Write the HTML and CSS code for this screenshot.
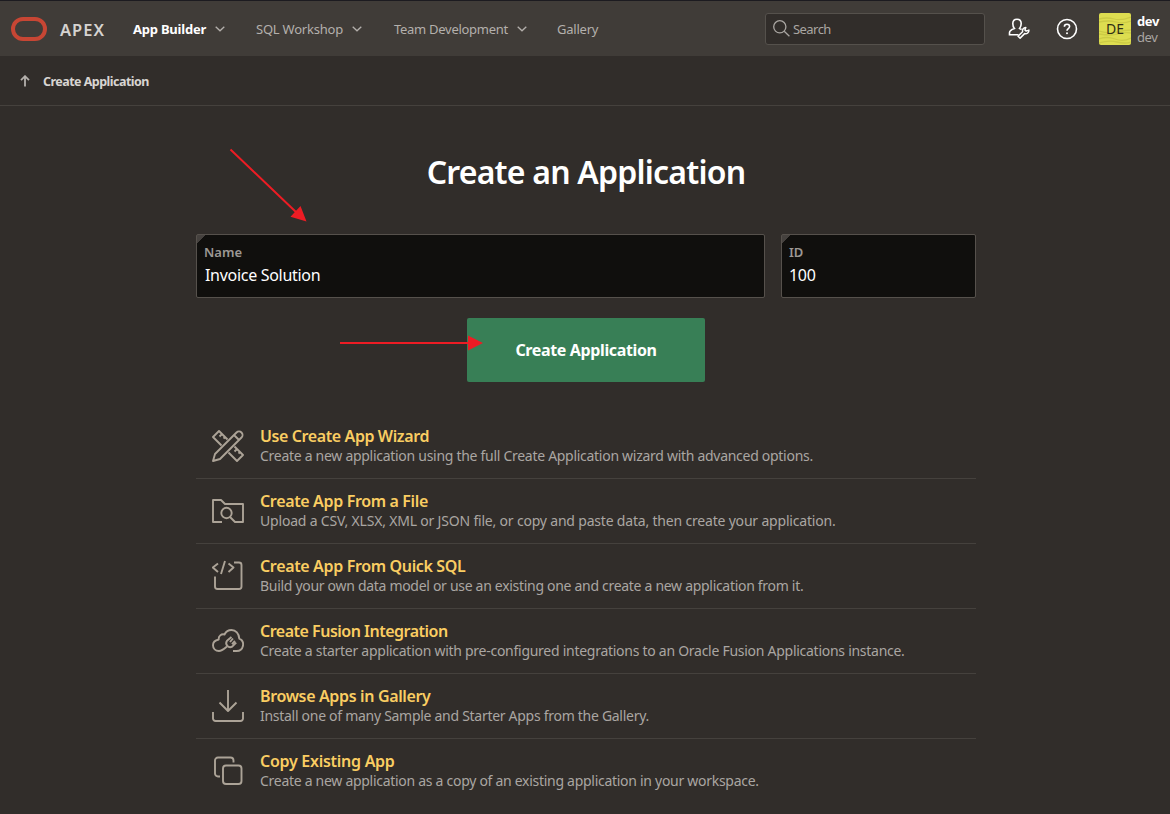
FILE: index.html
```html
<!DOCTYPE html>
<html lang="en">
<head>
<meta charset="utf-8">
<title>Create Application</title>
<link rel="stylesheet" href="styles.css">
</head>
<body>
<header class="header">
  <div class="brand">
    <svg class="brand-mark" width="36" height="24" viewBox="0 0 36 24"><rect x="2" y="2" width="32" height="20" rx="10"/></svg>
    <span class="brand-name">APEX</span>
  </div>
  <nav class="nav">
    <a class="nav-item nav-builder"><span>App Builder</span><svg class="chev" width="10" height="6" viewBox="0 0 10 6"><path d="M.7 .7 5 4.8 9.3 .7"/></svg></a>
    <a class="nav-item nav-sql"><span>SQL Workshop</span><svg class="chev" width="10" height="6" viewBox="0 0 10 6"><path d="M.7 .7 5 4.8 9.3 .7"/></svg></a>
    <a class="nav-item nav-team"><span>Team Development</span><svg class="chev" width="10" height="6" viewBox="0 0 10 6"><path d="M.7 .7 5 4.8 9.3 .7"/></svg></a>
    <a class="nav-item nav-gallery"><span>Gallery</span></a>
  </nav>
  <div class="search">
    <svg class="search-icon" width="17" height="17" viewBox="0 0 17 17"><circle cx="6.8" cy="6.8" r="6.1"/><path d="M11.2 11.2 16.4 16.2"/></svg>
    <span>Search</span>
  </div>
  <svg class="top-icon admin" width="22" height="22" viewBox="0 0 22 22"><path d="M10.500 16.700H1.500v-2c0-2 1.500-3 4.900-4.200C5.100 9 4.800 7.500 4.800 5.600 4.800 3 6.500 1.200 9 1.200S13.200 3 13.200 5.600c0 1.900-.4 3.400-1.600 4.900l2 .9"/><path class="wrench" d="M10 18.300l4.600-4.600c-.5-2.300.9-4.200 3.200-4.300l-.9 2.500 1.300 1.200 2.700-1c.2 2.500-1.900 4.100-4.300 3.500l-4.500 4.500z"/></svg>
  <svg class="top-icon help" width="22" height="22" viewBox="0 0 22 22"><circle cx="11" cy="11" r="9.500"/><path d="M8.400 8.800C8.400 7.100 9.500 6.300 11 6.300s2.600.9 2.600 2.300c0 2-2.600 2-2.600 4.100"/><circle class="dot" cx="11" cy="15.300" r="1"/></svg>
  <div class="avatar">
    <svg class="grain" width="32" height="32" viewBox="0 0 32 32"><path d="M0 6q8-2 15 0t17-2M0 9q10-2 17 0t15-1M0 18q10 3 18 1t14-2M0 21q12 2 19 0t13-1M0 26q8-3 16 0t16-1M0 30q10-3 18-1t14 0"/></svg>
    <span class="avatar-text">DE</span>
  </div>
  <div class="user"><b class="user-name">dev</b><span class="user-space">dev</span></div>
</header>
<div class="crumb">
  <svg class="crumb-icon" width="10" height="12" viewBox="0 0 10 12"><path d="M5 11.500V1.500M1 5.200 5 1.200l4 4"/></svg>
  <span class="crumb-text">Create Application</span>
</div>
<main class="main">
  <h1 class="title">Create an Application</h1>
  <div class="fields">
    <div class="field field-name"><label class="label">Name</label><span class="value">Invoice Solution</span></div>
    <div class="field field-id"><label class="label">ID</label><span class="value value-id">100</span></div>
  </div>
  <button class="create">Create Application</button>
  <ul class="options">
    <li class="option">
      <svg class="icon" width="32" height="32" viewBox="0 0 32 32"><path d="M1 31l2-7L24.500 2.500a3.500 3.500 0 0 1 5 5L8 29zM22 5l5 5M9.500 15.500 1 7l6-6 8.500 8.500M22.500 16.500 31 25l-6 6-8.500-8.500M10 4 7.500 6.500M13 7l-1.500 1.500M25 19l-2.500 2.500M28 22l-1.500 1.500"/></svg>
      <div class="copy"><a class="name t1">Use Create App Wizard</a><p class="desc d1">Create a new application using the full Create Application wizard with advanced options.</p></div>
    </li>
    <li class="option">
      <svg class="icon" width="32" height="32" viewBox="0 0 32 32"><path d="M10 27H1V5h8l4 4h18v18h-8L18 22"/><circle cx="14.500" cy="18" r="5.200"/></svg>
      <div class="copy"><a class="name t2">Create App From a File</a><p class="desc d2">Upload a CSV, XLSX, XML or JSON file, or copy and paste data, then create your application.</p></div>
    </li>
    <li class="option">
      <svg class="icon" width="32" height="32" viewBox="0 0 32 32"><path d="M6 3.500.8 7.500 6 12M16.500 3.500 21.500 7.500 16.500 12M13 1 9 14M22 2.500h5a2.500 2.500 0 0 1 2.500 2.500V26.500a2.500 2.500 0 0 1-2.500 2.500H5.500a2.500 2.500 0 0 1-2.500-2.500v-10"/></svg>
      <div class="copy"><a class="name t3">Create App From Quick SQL</a><p class="desc d3">Build your own data model or use an existing one and create a new application from it.</p></div>
    </li>
    <li class="option">
      <svg class="icon" width="32" height="32" viewBox="0 0 32 32"><path d="M21 26h3.500a6.500 6.500 0 0 0 2.800-12.400C27 8.500 23.700 5 19.500 5c-3.300 0-5.700 1.800-7 4.500C9.300 8.700 6.300 11 6.700 14.500 3 15.200 1 17.500 1 20.300 1 23.500 3.500 26 7 26c3 0 5-2 8-4.500"/><path d="M19.500 12 15 15.800a4 4 0 0 0 5.200 5.800l4-4M18 17l3-3.500M20 19.200l3-3.200"/></svg>
      <div class="copy"><a class="name t4">Create Fusion Integration</a><p class="desc d4">Create a starter application with pre-configured integrations to an Oracle Fusion Applications instance.</p></div>
    </li>
    <li class="option">
      <svg class="icon" width="32" height="32" viewBox="0 0 32 32"><path d="M16 0v21M7.500 12.500 16 21l8.500-8.500M1 22v6.500a2.500 2.500 0 0 0 2.500 2.500h25a2.500 2.500 0 0 0 2.500-2.500v-6.500"/></svg>
      <div class="copy"><a class="name t5">Browse Apps in Gallery</a><p class="desc d5">Install one of many Sample and Starter Apps from the Gallery.</p></div>
    </li>
    <li class="option">
      <svg class="icon" width="32" height="32" viewBox="0 0 32 32"><rect x="11" y="10.500" width="18.500" height="18.500" rx="3"/><path d="M8 21.500H6a3 3 0 0 1-3-3V5.500a3 3 0 0 1 3-3h12.500a3 3 0 0 1 3 3v2"/></svg>
      <div class="copy"><a class="name t6">Copy Existing App</a><p class="desc d6">Create a new application as a copy of an existing application in your workspace.</p></div>
    </li>
  </ul>
</main>
<svg class="arrows" width="1170" height="814" viewBox="0 0 1170 814"><path d="M230.500 149.500 297 213M340 343h130"/><path class="heads" d="M306.500 221.500 290.500 216.700 300.500 206zM483 343l-15 7.500v-15z"/></svg>
</body>
</html>
```
FILE: styles.css
```css
* { box-sizing: border-box; }
body { margin: 0; height: 814px; overflow: hidden; background: #312d2a; color: #fff; font-family: "Noto Sans", "Open Sans", sans-serif; font-size: 13px; }
svg { display: block; flex: none; fill: none; stroke: currentColor; }
.header { display: flex; align-items: center; height: 56px; border-top: 1px solid #1c1b20; background: #403c38; padding-left: 11px; white-space: nowrap; }
.brand { display: flex; align-items: center; width: 122px; gap: 13px; }
.brand-mark { color: #c74634; stroke-width: 4; }
.brand-name { padding-top: 2px; color: #d6d3d0; font-size: 16.500px; font-weight: 600; letter-spacing: 1px; }
.nav { display: flex; width: 632px; color: #b4b0ac; }
.nav-item { display: flex; align-items: center; justify-content: space-between; letter-spacing: -.22px; }
.nav-builder { width: 92px; margin-right: 31px; color: #fff; font-weight: 700; }
.nav-sql { width: 106px; margin-right: 32px; }
.nav-team { width: 133px; margin-right: 30px; letter-spacing: -.28px; }
.chev { color: #b4b0ac; stroke-width: 1.300; }
.search { display: flex; align-items: center; width: 220px; height: 32px; padding-left: 7px; gap: 3px; background: #312d2a; border: 1px solid #55514c; border-radius: 3px; color: #aaa6a2; letter-spacing: -.55px; }
.search-icon { stroke-width: 1.300; }
.top-icon { stroke-width: 1.600; }
.admin { margin-left: 23px; }
.wrench { stroke-width: 1.500; stroke-linejoin: round; }
.help { margin-left: 26px; }
.dot { fill: #fff; stroke: none; }
.avatar { display: grid; place-items: center; width: 32px; height: 32px; margin-left: 21px; background: #dddd50; border-radius: 2px; color: #302e15; font-size: 14px; }
.grain, .avatar-text { grid-area: 1 / 1; }
.grain { color: #cccb45; stroke-width: 1.300; }
.user { display: flex; flex-direction: column; margin-left: 6px; padding-top: 1px; line-height: 16px; letter-spacing: -.4px; }
.user-space { color: #aaa6a2; }
.crumb { display: flex; align-items: center; height: 50px; padding-left: 20px; gap: 13px; border-bottom: 1px solid #45413d; color: #d8d5d2; font-size: 12.500px; font-weight: 700; letter-spacing: -.53px; }
.crumb-text { padding-top: 2px; }
.crumb-icon { color: #b4b0ac; stroke-width: 1.800; }
.main { display: flex; flex-direction: column; align-items: center; width: 780px; margin-left: 196px; padding-top: 44px; white-space: nowrap; }
.title { margin: 0; height: 84px; font-size: 32px; line-height: 43px; font-weight: 600; letter-spacing: -.79px; }
.fields { display: flex; gap: 16px; width: 780px; }
.field { display: flex; flex-direction: column; height: 64px; padding: 8px 7px; border: 1px solid #56514c; border-radius: 2px; background: linear-gradient(135deg, #45413e 6px, #100f0d 6px); }
.field-name { width: 569px; }
.field-id { width: 195px; }
.label { color: #9c9894; font-size: 13px; font-weight: 600; line-height: 19px; letter-spacing: 0; }
.value { padding-left: 1px; font-size: 16px; line-height: 26px; letter-spacing: -.3px; }
.value-id { padding-left: 0; }
.create { width: 238px; height: 64px; margin-top: 20px; padding: 0; border: 0; border-radius: 2px; background: #387f56; color: #fff; font: 700 16px "Noto Sans", sans-serif; letter-spacing: -.36px; }
.options { width: 780px; margin: 32px 0 0; padding: 0; list-style: none; }
.option { display: flex; height: 65px; padding: 12px 16px 0; gap: 16px; border-bottom: 1px solid #45413d; }
.option:last-child { border-bottom: 0; }
.icon { margin-top: 4px; color: #aca397; stroke-width: 1.900; stroke-linejoin: round; }
.name { display: block; height: 20px; line-height: 20px; color: #facd62; font-size: 16px; font-weight: 600; letter-spacing: -.4px; }
.desc { margin: 0; line-height: 20px; color: #aaa6a2; font-size: 14px; letter-spacing: -.285px; }
.t2, .t3, .t5 { letter-spacing: -.35px; }
.t4 { letter-spacing: -.5px; }
.t6 { letter-spacing: -.27px; }
.d2 { letter-spacing: -.19px; }
.d3 { letter-spacing: -.3px; }
.d4 { letter-spacing: -.27px; }
.arrows { position: absolute; top: 0; left: 0; color: #ed1c24; stroke-width: 2; pointer-events: none; }
.heads { fill: currentColor; stroke: none; }
```
